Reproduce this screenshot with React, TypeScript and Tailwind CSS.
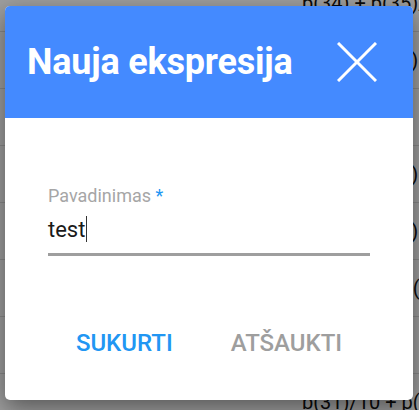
import React from 'react';

const rows = [
  'b(34) + b(35)/10',
  'b(32) + b(33)',
  'b(30)/100',
  'b(28) + b(29)',
  'b(26) + b(27)',
  'b(24)/10 + b(25)',
  'b(22)/100',
  'b(31)/10 + p(2)',
];

export default function App() {
  return (
    <div className="relative w-[419px] h-[410px] overflow-hidden bg-white" style={{ fontFamily: 'Roboto, "Liberation Sans", sans-serif' }}>
      <div className="-mt-[25px]">
        {rows.map((r, i) => (
          <div key={i} className="h-[57px] border-b border-[#dedede] flex items-center">
            <span className="ml-[302px] whitespace-nowrap text-[20px] text-[#111]">{r}</span>
          </div>
        ))}
      </div>

      <div className="absolute inset-0 bg-black/[0.38] pt-[6px] pl-[5px]">
        <div className="w-[408px] h-[394px] rounded-[5px] bg-white overflow-hidden shadow-[0_8px_24px_rgba(0,0,0,0.45)] flex flex-col">
          <div className="h-[112px] bg-[#448aff] flex items-center justify-between pl-[22px] pr-[36px]">
            <h2 className="text-[36px] font-bold text-white tracking-[-0.2px]">Nauja ekspresija</h2>
            <svg width="40" height="40" viewBox="0 0 40 40" className="text-white">
              <line x1="1" y1="1" x2="39" y2="39" stroke="currentColor" strokeWidth="3" />
              <line x1="39" y1="1" x2="1" y2="39" stroke="currentColor" strokeWidth="3" />
            </svg>
          </div>

          <div className="px-[43px] pt-[67px]">
            <label className="block text-[18px] leading-[21px] text-[#a6a6a6]">
              Pavadinimas <span className="text-[#2196f3]">*</span>
            </label>
            <div className="mt-[7px] flex items-center h-[32px] text-[22px] text-[#1a1a1a]">
              test<span className="w-px h-[26px] bg-[#333] ml-[1px]" />
            </div>
            <div className="mt-[8px] h-[3px] bg-[#9e9e9e]" />
          </div>

          <div className="mt-[69px] flex justify-center gap-[58px] text-[24px] font-medium">
            <button className="text-[#2196f3]">SUKURTI</button>
            <button className="text-[#9e9e9e]">ATŠAUKTI</button>
          </div>
        </div>
      </div>
    </div>
  );
}
